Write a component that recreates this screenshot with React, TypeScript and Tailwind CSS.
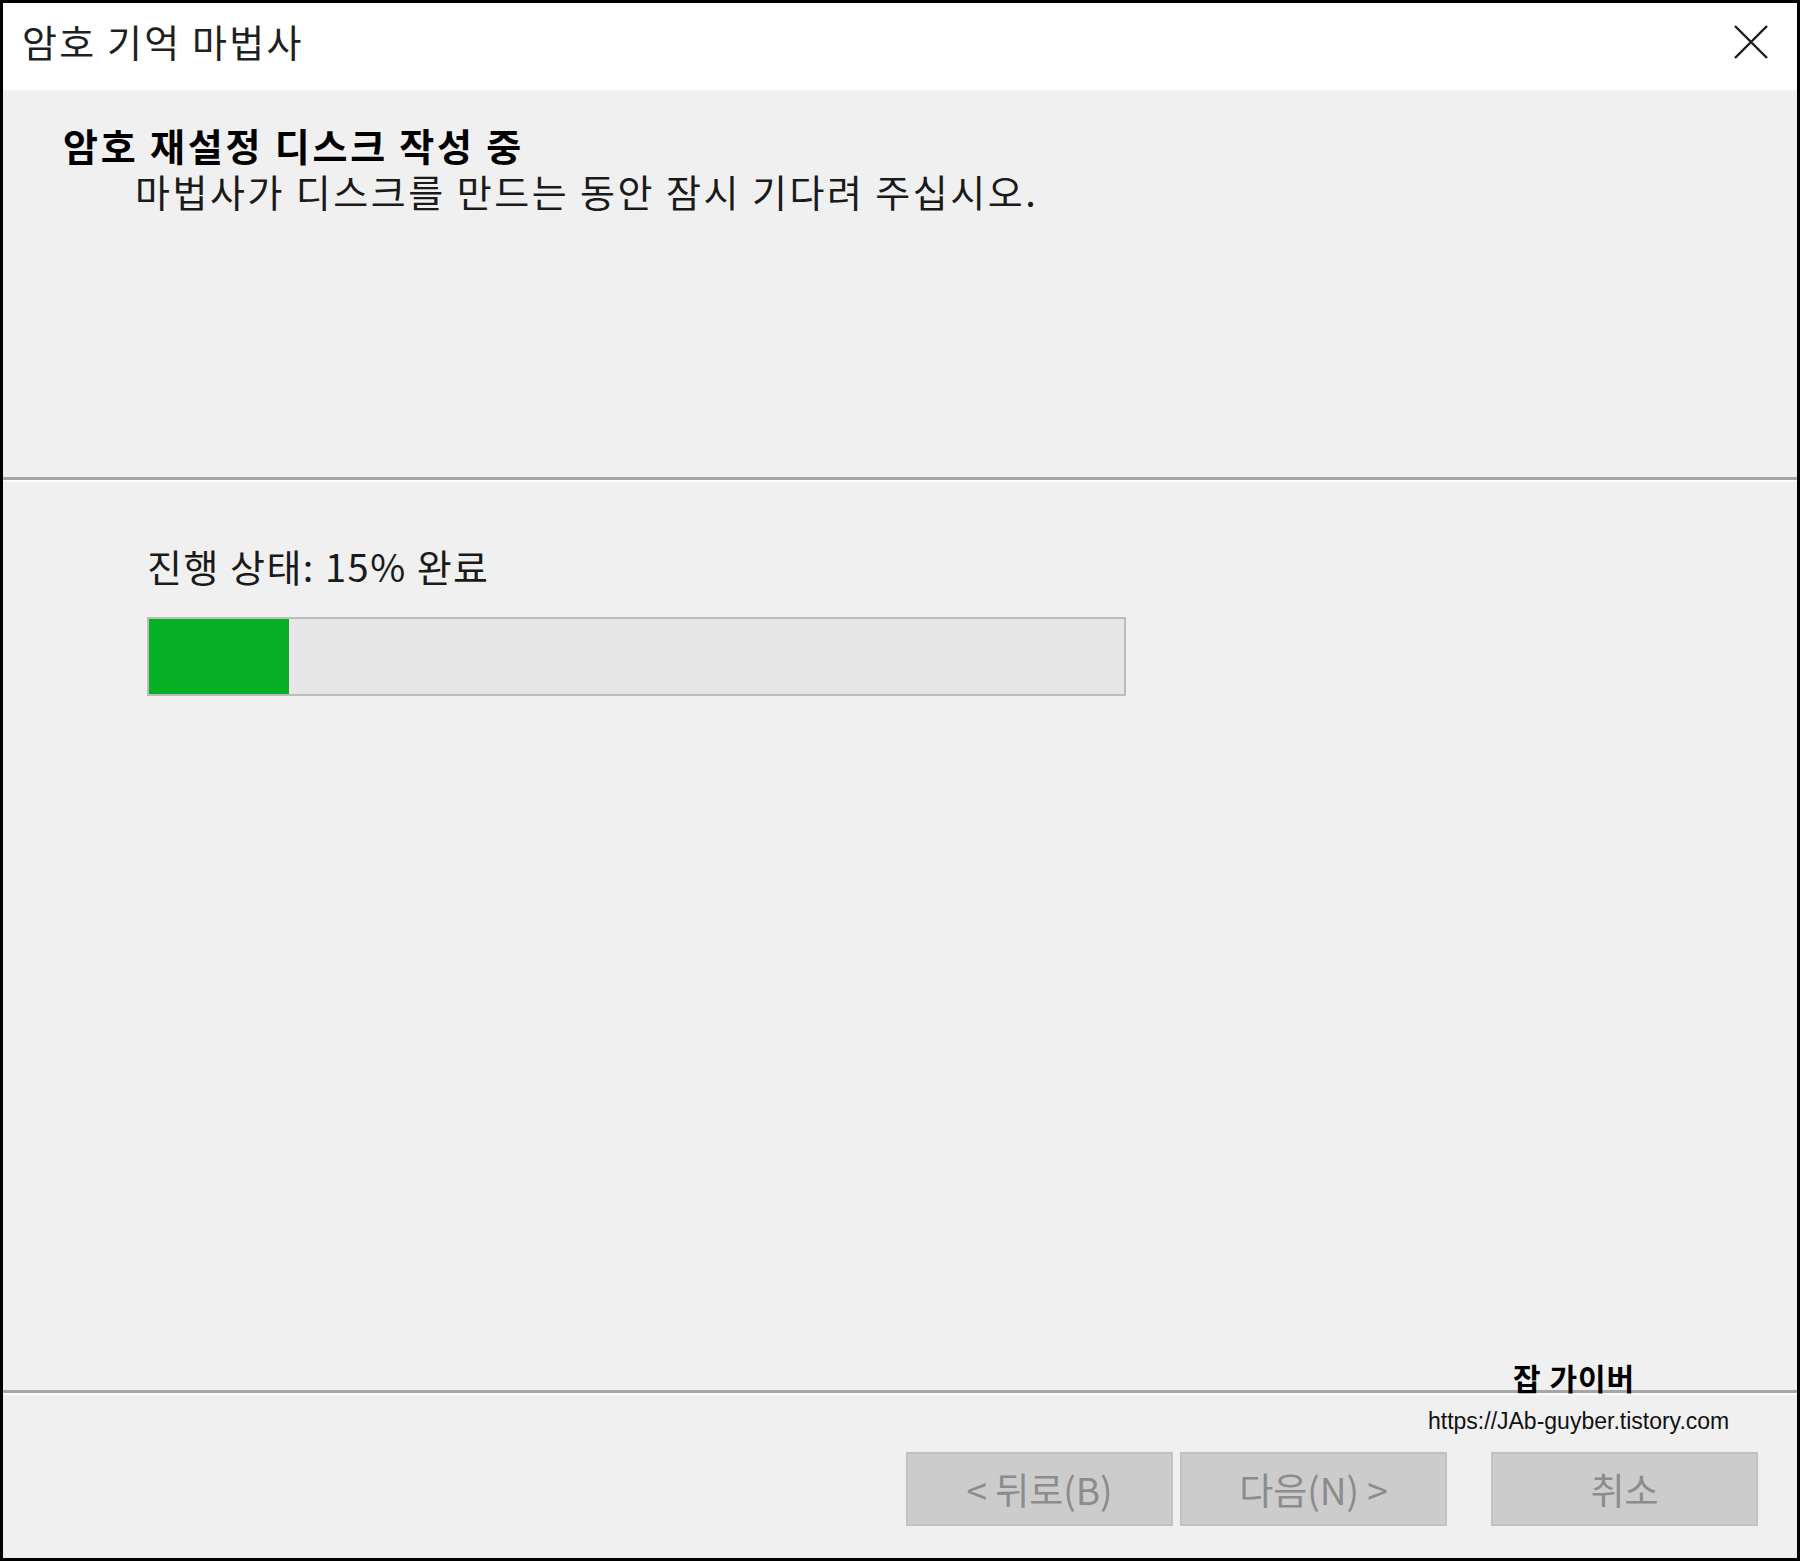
const font = { fontFamily: '"Noto Sans CJK KR", "Noto Sans", sans-serif' }

function WizardButton({ label }: { label: string }) {
  return (
    <button className="h-[74px] w-[267px] border-2 border-[#c2c2c2] bg-[#cccccc] text-[37px] leading-none text-[#8c8c8c]">
      {label}
    </button>
  )
}

export default function App() {
  const progress = 15

  return (
    <div
      className="relative flex h-[1561px] w-[1800px] flex-col border-[3px] border-black bg-[#f0f0f0]"
      style={font}
    >
      {/* Title bar */}
      <div className="flex h-[87px] items-center justify-between bg-white pl-[19px] pr-[29px]">
        <div className="mb-[12px] text-[38px] leading-none tracking-[2.2px] text-[#1f1f1f]">암호 기억 마법사</div>
        <svg className="mb-[10px] h-[34px] w-[34px]" viewBox="0 0 34 34" fill="none" stroke="#1a1a1a" strokeWidth="2.4">
          <path d="M1 1 L33 33 M33 1 L1 33" />
        </svg>
      </div>

      {/* Header */}
      <div className="h-[387px] pt-[35px]">
        <div className="pl-[60px] text-[38px] font-bold leading-[40px] tracking-[2.8px] text-black">
          암호 재설정 디스크 작성 중
        </div>
        <div className="mt-[6px] pl-[132px] text-[38px] leading-[40px] tracking-[2.5px] text-[#1a1a1a]">
          마법사가 디스크를 만드는 동안 잠시 기다려 주십시오.
        </div>
      </div>
      <div className="h-[3px] bg-[#a6a6a6]" />
      <div className="h-[2px] bg-[#fbfbfb]" />

      {/* Progress */}
      <div className="flex-1 pl-[144px] pt-[62px]">
        <div className="text-[38px] leading-[44px] tracking-[1.5px] text-[#1a1a1a]">진행 상태: {progress}% 완료</div>
        <div className="mt-[29px] h-[79px] w-[979px] border-2 border-[#bcbcbc] bg-[#e6e6e6]">
          <div className="h-full w-[140px] bg-[#06b025]" />
        </div>
      </div>

      {/* Footer */}
      <div className="h-[3px] bg-[#a6a6a6]" />
      <div className="h-[2px] bg-[#fbfbfb]" />
      <div className="flex h-[163px] items-start justify-end pr-[39px] pt-[57px]">
        <div className="flex gap-[7px]">
          <WizardButton label="< 뒤로(B)" />
          <WizardButton label="다음(N) >" />
        </div>
        <div className="ml-[44px]">
          <WizardButton label="취소" />
        </div>
      </div>

      {/* Watermark */}
      <div className="absolute left-[1510px] top-[1359px] text-[30px] font-bold leading-none tracking-[1px] text-black">
        잡 가이버
      </div>
      <div
        className="absolute left-[1425px] top-[1407px] text-[23px] leading-none text-[#111]"
        style={{ fontFamily: '"Liberation Sans", Arial, sans-serif' }}
      >
        https://JAb-guyber.tistory.com
      </div>
    </div>
  )
}
